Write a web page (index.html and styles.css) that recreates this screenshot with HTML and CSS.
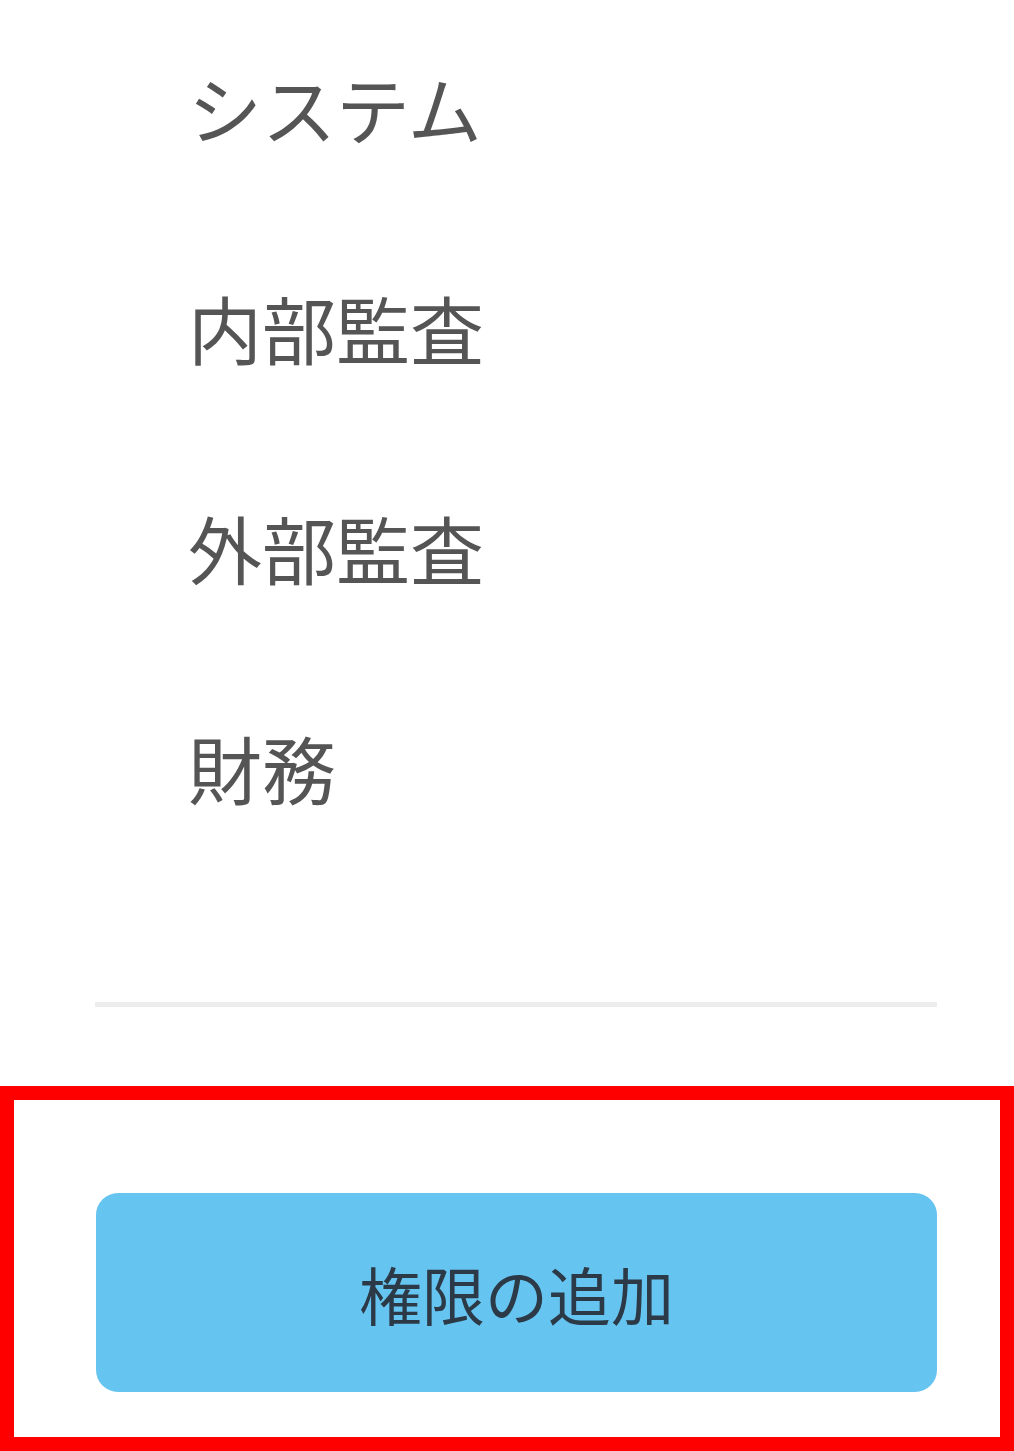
FILE: index.html
```html
<!doctype html>
<html lang="ja">
  <head>
    <meta charset="UTF-8" />
    <meta name="viewport" content="width=device-width, initial-scale=1.0" />
    <title>権限</title>
    <link rel="stylesheet" href="styles.css">
  </head>
  <body>
    <div class="panel">
      <ul class="role-list">
        <li class="role">システム</li>
        <li class="role">内部監査</li>
        <li class="role">外部監査</li>
        <li class="role">財務</li>
      </ul>

      <hr class="divider" />

      <div class="actions">
        <button class="add-button" type="button">権限の追加</button>
      </div>
    </div>
  </body>
</html>
```

FILE: styles.css
```css
body {
  margin: 0;
  padding: 0;
  background: #fff;
  font-family: "Noto Sans CJK JP", "Noto Sans", sans-serif;
  -webkit-font-smoothing: antialiased;
}

.panel {
  width: 1014px;
}

.role-list {
  list-style: none;
  margin: 0;
  padding: 0 0 0 188px;
}

.role {
  height: 220px;
  line-height: 214px;
  font-size: 74px;
  color: #555;
}

.divider {
  margin: 122px 77px 0 95px;
  border: none;
  height: 5px;
  background: #ededed;
}

.actions {
  margin-top: 79px;
  border: 14px solid #ff0000;
  padding: 93px 63px 45px 82px;
}

.add-button {
  display: block;
  width: 100%;
  height: 199px;
  border: none;
  border-radius: 22px;
  background: #66c4f0;
  color: #2c3a48;
  font-family: "Noto Sans CJK JP", "Noto Sans", sans-serif;
  font-size: 63px;
  letter-spacing: 0;
  cursor: pointer;
}
```
